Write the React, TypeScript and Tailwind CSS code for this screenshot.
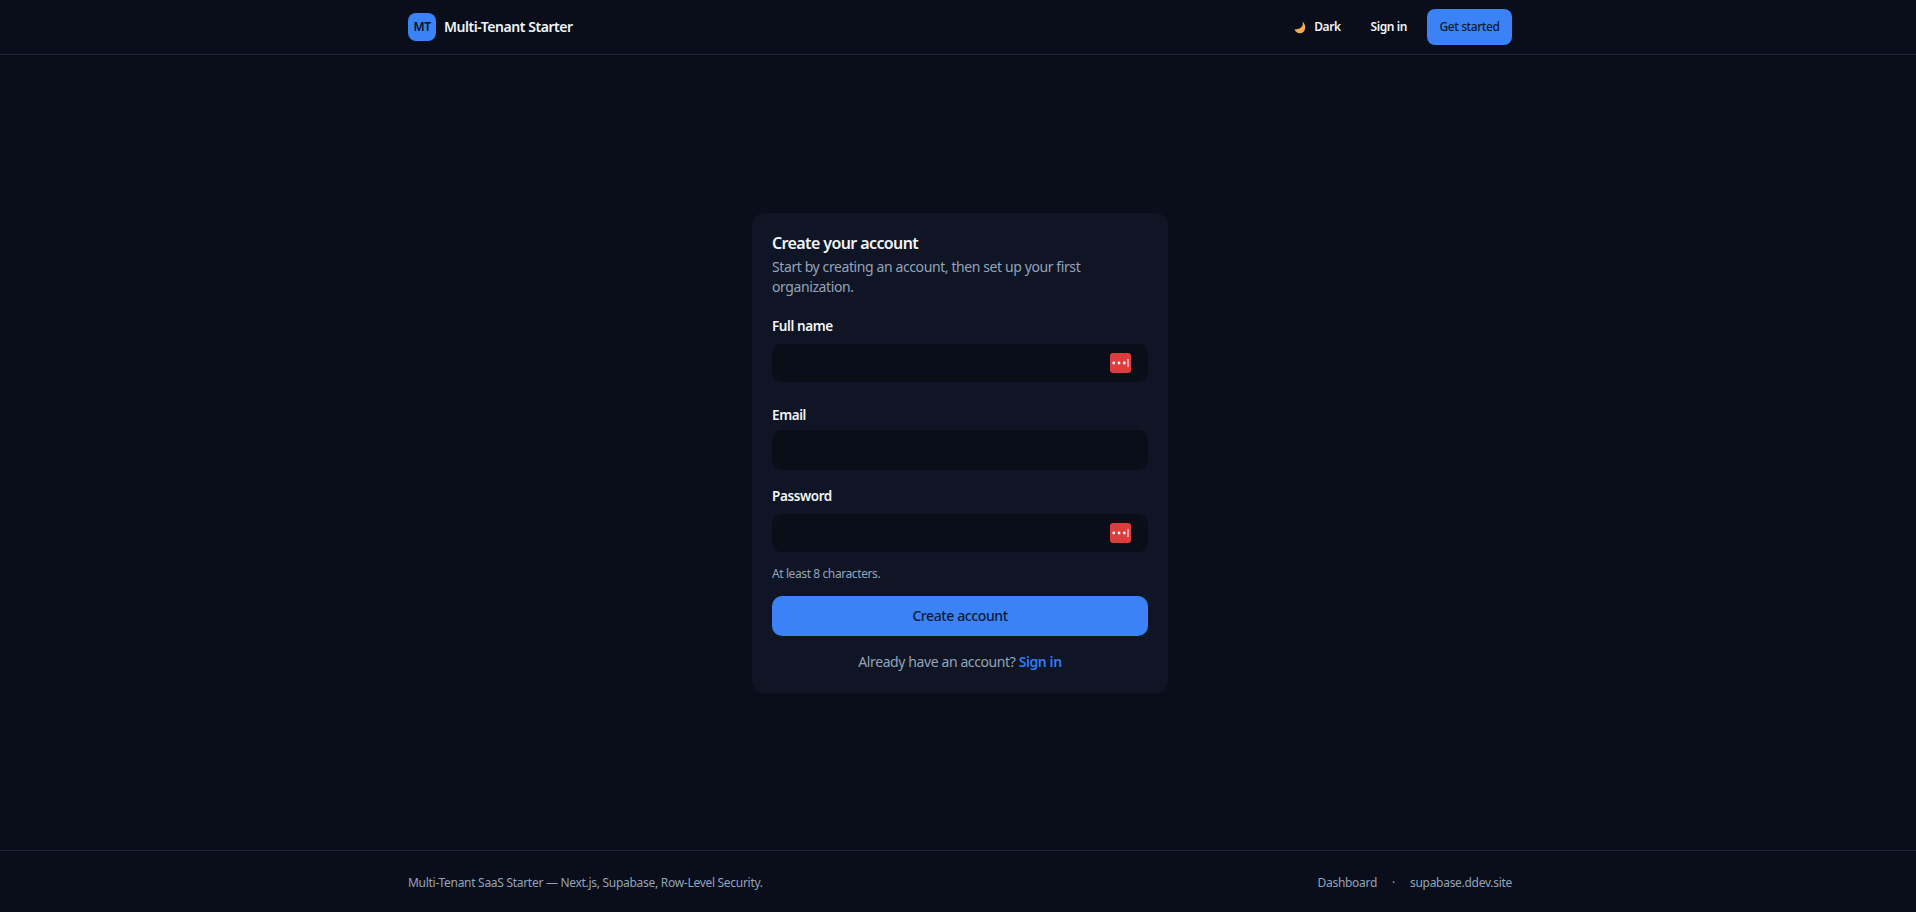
export default function App() {
  return (
    <div className="flex h-[912px] flex-col overflow-hidden bg-[#090e1a] font-['Noto_Sans',sans-serif] tracking-[-0.025em] text-[#e5e7eb]">
      <header className="h-[55px] shrink-0 border-b border-[#1e293b] pl-1">
        <div className="mx-auto flex h-[54px] w-[1104px] items-center justify-between">
          <div className="flex items-center gap-2">
            <div className="flex h-7 w-7 items-center justify-center rounded-lg bg-[#3b82f6] text-xs font-semibold text-[#0b1220]">MT</div>
            <span className="text-sm font-semibold tracking-[-0.032em] text-[#f1f5f9]">Multi-Tenant Starter</span>
          </div>
          <nav className="flex items-center text-xs font-semibold tracking-[-0.035em] text-[#f1f5f9]">
            <span className="flex items-center gap-2">
              <svg width="12" height="13" viewBox="0 0 12 13"><path d="M8.500 0.500C10 5 6.500 8.500 0.500 8.500C1.500 11.500 5 13 7.500 12C12 10.500 12.500 4 8.500 0.500z" fill="#f7ab4c" /></svg>
              <span>Dark</span>
            </span>
            <span className="ml-[30px]">Sign in</span>
            <span className="ml-[20px] flex h-9 w-[85px] items-center justify-center rounded-lg bg-[#3b82f6] font-medium text-[#0b1a3a]">Get started</span>
          </nav>
        </div>
      </header>
      <main className="flex flex-1 items-center justify-center pl-1">
        <div className="h-[480px] w-[416px] rounded-xl bg-[#0f1524] p-5">
          <h1 className="mb-1 text-base leading-5 font-semibold tracking-[-0.038em] text-[#f1f5f9]">Create your account</h1>
          <p className="text-sm leading-5 text-[#94a3b8]">Start by creating an account, then set up your first organization.</p>
          <label className="mt-[19px] block text-[13.5px] leading-5 font-semibold text-[#f1f5f9]">Full name</label>
          <div className="relative mt-2 h-[38px] rounded-[10px] bg-[#0a0e18]"><Pass /></div>
          <label className="mt-[23px] block text-[13.5px] leading-5 font-semibold text-[#f1f5f9]">Email</label>
          <div className="mt-[5px] h-10 rounded-[10px] bg-[#0a0e18]" />
          <label className="mt-4 block text-[13.5px] leading-5 font-semibold text-[#f1f5f9]">Password</label>
          <div className="relative mt-2 h-[38px] rounded-[10px] bg-[#0a0e18]"><Pass /></div>
          <p className="mt-3 text-xs leading-5 text-[#94a3b8]">At least 8 characters.</p>
          <div className="mt-3 flex h-10 items-center justify-center rounded-[10px] bg-[#3b82f6] text-sm font-medium text-[#0b1a3a]">Create account</div>
          <p className="mt-4 text-center text-sm leading-5 text-[#94a3b8]">Already have an account? <span className="font-semibold text-[#2f7af5]">Sign in</span></p>
        </div>
      </main>
      <footer className="h-[62px] shrink-0 border-t border-[#1e293b] pl-1">
        <div className="mx-auto flex h-[61px] w-[1104px] items-center justify-between pt-[2px] text-xs tracking-[-0.024em] text-[#94a3b8]">
          <span>Multi-Tenant SaaS Starter — Next.js, Supabase, Row-Level Security.</span>
          <span className="flex items-center gap-[15px]"><span>Dashboard</span><span>·</span><span>supabase.ddev.site</span></span>
        </div>
      </footer>
    </div>
  );
}

function Pass() {
  return (
    <svg className="absolute top-[9px] left-[338px]" width="21" height="20" viewBox="0 0 21 20">
      <rect width="21" height="20" rx="3" fill="#dc3d3d" />
      <circle cx="3.800" cy="10" r="1.400" fill="#fff" />
      <circle cx="9" cy="10" r="1.400" fill="#fff" />
      <circle cx="14.300" cy="10" r="1.400" fill="#fff" />
      <rect x="17.500" y="6" width="1" height="8" fill="#fff" />
    </svg>
  );
}
